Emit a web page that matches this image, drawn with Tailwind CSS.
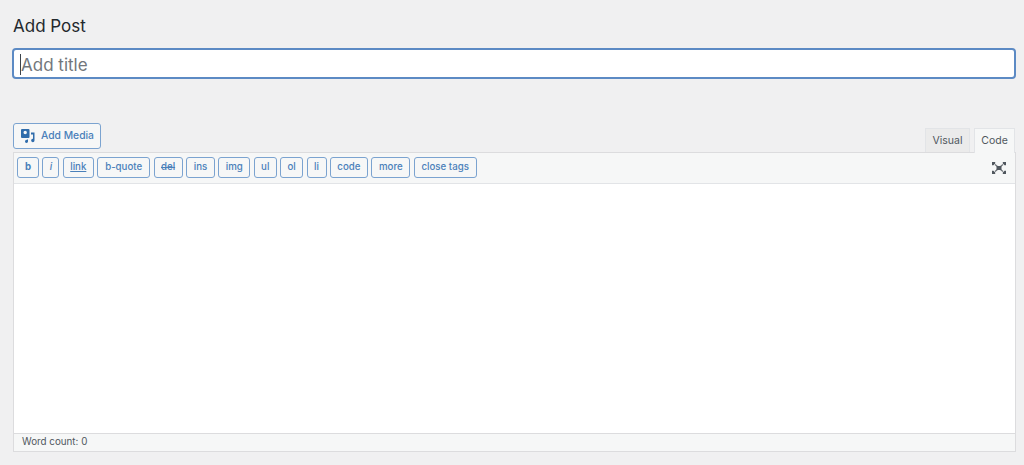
<!DOCTYPE html>
<html lang="en">
<head>
    <meta charset="UTF-8">
    <meta name="viewport" content="width=device-width, initial-scale=1.0">
    <title>Add Post</title>
    <script src="https://cdn.jsdelivr.net/npm/@tailwindcss/browser@4"></script>
</head>
<body class="bg-[#f0f0f1] h-[465px] overflow-hidden font-['Inter',sans-serif] text-[#1d2327]">
    <main class="pl-[12px] pr-[8px]">
        <h1 class="pt-[15px] pl-px h-[48px] text-[17px] leading-[22px] font-normal text-[#23282d]">Add Post</h1>

        <!-- Title -->
        <div class="h-[31px] bg-white border-2 border-[#5c8ac4] rounded-[4px] flex items-center pl-[6px] pt-[4px]">
            <span class="w-px h-[21px] -mt-[3px] bg-[#3c434a]"></span>
            <span class="text-[17px] text-[#72777c]">Add title</span>
        </div>

        <!-- Media button and tabs -->
        <div class="mt-[44px] h-[29px] pl-px flex justify-between items-end">
            <button class="self-start h-[26px] w-[88px] flex items-center gap-[5px] pl-[6px] bg-[#f6f7f7] border border-[#7ba3d0] rounded-[3px] text-[10.3px] font-medium text-[#4a80ba]">
                <svg class="w-[16px] h-[16px]" viewBox="0 0 16 16" fill="#2f6cab">
                    <path d="M2 1h6.500a1 1 0 0 1 1 1v7a1 1 0 0 1-1 1h-6.500a1 1 0 0 1-1-1v-7a1 1 0 0 1 1-1z M3.500 4.500a1.700 1.700 0 1 0 3.400 0a1.700 1.700 0 1 0-3.400 0z" fill-rule="evenodd"/>
                    <path d="M11 4.500h3.500v8a1.700 1.700 0 1 1-1.500-1.700v-4.300h-2z"/>
                    <path d="M5.500 11.500h2.500v2a1.500 1.500 0 1 1-1.300-1.500v-.5z"/>
                </svg>
                Add Media
            </button>
            <div class="flex gap-[4px] pr-px">
                <div class="h-[24px] w-[45px] flex items-center justify-center bg-[#ebebeb] border border-[#e2e4e7] border-b-0 text-[10.5px] text-[#50575e]">Visual</div>
                <div class="h-[25px] w-[41px] -mb-px flex items-center justify-center bg-[#f6f7f7] border border-[#e2e4e7] border-b-0 text-[10.5px] text-[#50575e] relative">Code</div>
            </div>
        </div>

        <!-- Editor -->
        <div class="ml-px h-[300px] border border-[#dcdcde] flex flex-col">
            <div class="h-[31px] shrink-0 bg-[#f6f7f7] border-b border-[#e2e4e7] flex items-center gap-[3.400px] pl-[3px] pr-[8px] pb-px">
                <button class="w-[22px] h-[21px] border border-[#7ba3d0] rounded-[3px] text-[9.700px] font-bold text-[#4a80ba]">b</button>
                <button class="w-[17px] h-[21px] border border-[#7ba3d0] rounded-[3px] text-[9.700px] font-medium italic text-[#4a80ba]">i</button>
                <button class="w-[31px] h-[21px] border border-[#7ba3d0] rounded-[3px] text-[9.700px] font-medium underline text-[#4a80ba]">link</button>
                <button class="w-[53px] h-[21px] border border-[#7ba3d0] rounded-[3px] text-[9.700px] font-medium text-[#4a80ba]">b-quote</button>
                <button class="w-[29px] h-[21px] border border-[#7ba3d0] rounded-[3px] text-[9.700px] font-medium line-through text-[#4a80ba]">del</button>
                <button class="w-[29px] h-[21px] border border-[#7ba3d0] rounded-[3px] text-[9.700px] font-medium text-[#4a80ba]">ins</button>
                <button class="w-[32px] h-[21px] border border-[#7ba3d0] rounded-[3px] text-[9.700px] font-medium text-[#4a80ba]">img</button>
                <button class="w-[23px] h-[21px] border border-[#7ba3d0] rounded-[3px] text-[9.700px] font-medium text-[#4a80ba]">ul</button>
                <button class="w-[23px] h-[21px] border border-[#7ba3d0] rounded-[3px] text-[9.700px] font-medium text-[#4a80ba]">ol</button>
                <button class="w-[20px] h-[21px] border border-[#7ba3d0] rounded-[3px] text-[9.700px] font-medium text-[#4a80ba]">li</button>
                <button class="w-[38px] h-[21px] border border-[#7ba3d0] rounded-[3px] text-[9.700px] font-medium text-[#4a80ba]">code</button>
                <button class="w-[39px] h-[21px] border border-[#7ba3d0] rounded-[3px] text-[9.700px] font-medium text-[#4a80ba]">more</button>
                <button class="w-[63px] h-[21px] border border-[#7ba3d0] rounded-[3px] text-[9.700px] font-medium text-[#4a80ba]">close tags</button>
                <svg class="ml-auto mr-px w-[14px] h-[12px]" viewBox="0 0 14 12">
                    <path d="M3 2.500l2.500 2M11 2.500l-2.500 2M3 9.500l2.500-2M11 9.500l-2.500-2" fill="none" stroke="#6b7176" stroke-width="1.200"/>
                    <rect x="4.500" y="4" width="5" height="4" fill="#50575e"/>
                    <path d="M0 0h3.200v1.500l-1.700 1.700h-1.500zM14 0h-3.200v1.500l1.700 1.700h1.500zM0 12h3.200v-1.500l-1.700-1.700h-1.500zM14 12h-3.200v-1.500l1.700-1.700h1.500z" fill="#50575e"/>
                </svg>
            </div>
            <div class="flex-1 bg-white"></div>
            <div class="h-[18px] shrink-0 bg-[#f6f7f7] border-t border-[#dcdcde] flex items-center pl-[8px] text-[9.800px] text-[#50575e]">Word count: 0</div>
        </div>
    </main>
</body>
</html>
